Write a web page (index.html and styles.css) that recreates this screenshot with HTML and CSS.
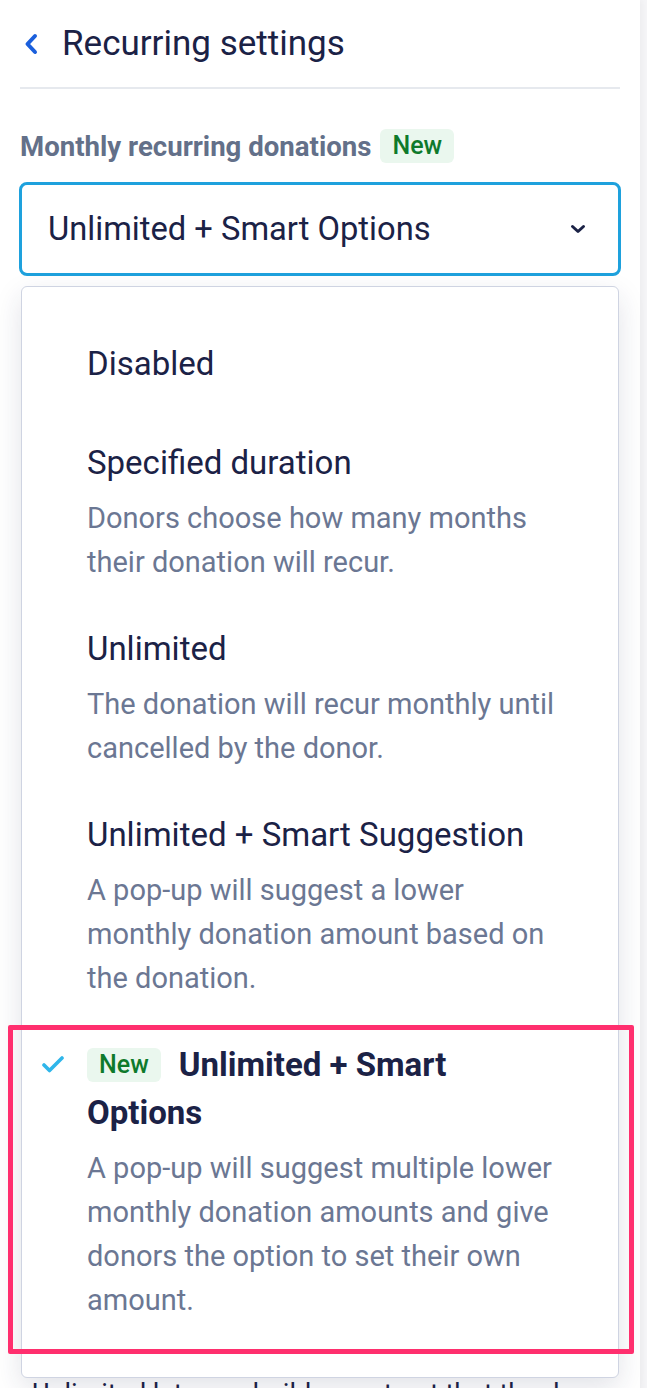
FILE: index.html
```html
<html lang="en">
<head>
    <meta charset="UTF-8">
    <meta name="viewport" content="width=device-width, initial-scale=1.0">
    <title>Recurring settings</title>
    <link rel="stylesheet" href="styles.css">
</head>
<body>
    <div class="panel">
        <div class="panel-header">
            <button type="button" class="back-button">
                <svg width="16" height="22" viewBox="0 0 16 22"><path d="M12 3 L4.5 11 L12 19" fill="none" stroke="#1a5fdc" stroke-width="4" stroke-linecap="round" stroke-linejoin="round"/></svg>
            </button>
            <h1 class="panel-title">Recurring settings</h1>
        </div>

        <div class="field">
            <div class="field-label">Monthly recurring donations <span class="badge">New</span></div>

            <div class="select-wrap">
                <div class="select-box">
                    <span class="select-value">Unlimited + Smart Options</span>
                    <svg class="select-arrow" width="16" height="12" viewBox="0 0 16 12"><path d="M2.5 3.5 L8 8.5 L13.5 3.5" fill="none" stroke="#1b2246" stroke-width="3" stroke-linecap="round" stroke-linejoin="round"/></svg>
                </div>

                <div class="dropdown">
                    <div class="option option-single">
                        <div class="option-title">Disabled</div>
                    </div>
                    <div class="option">
                        <div class="option-title">Specified duration</div>
                        <div class="option-desc">Donors choose how many months their donation will recur.</div>
                    </div>
                    <div class="option">
                        <div class="option-title">Unlimited</div>
                        <div class="option-desc">The donation will recur monthly until cancelled by the donor.</div>
                    </div>
                    <div class="option">
                        <div class="option-title">Unlimited + Smart Suggestion</div>
                        <div class="option-desc">A pop-up will suggest a lower monthly donation amount based on the donation.</div>
                    </div>
                    <div class="option option-selected">
                        <svg class="option-check" width="22" height="18" viewBox="0 0 22 18"><path d="M2 9 L7.5 14.5 L20 2" fill="none" stroke="#2fb6ea" stroke-width="3.6" stroke-linecap="round" stroke-linejoin="round"/></svg>
                        <div class="option-title"><span class="badge badge-inline">New</span>Unlimited + Smart Options</div>
                        <div class="option-desc">A pop-up will suggest multiple lower monthly donation amounts and give donors the option to set their own amount.</div>
                        <div class="highlight"></div>
                    </div>
                </div>
            </div>

            <p class="field-help">Unlimited lets you build a contract that the donor can cancel whenever they like.</p>
        </div>
    </div>
</body>
</html>
```

FILE: styles.css
```css
html {
    background-color: #f5f5f7;
}

body {
    margin: 0;
    font-family: Roboto, "Noto Sans", sans-serif;
    color: #1b2246;
}

.panel {
    width: 640px;
    min-height: 1388px;
    box-sizing: border-box;
    padding: 0 20px;
    background-color: #fff;
    box-shadow: 2px 0 6px rgba(0, 0, 0, 0.04);
}

.panel-header {
    display: flex;
    align-items: center;
    height: 87px;
    border-bottom: 2px solid #e6e9ee;
}

.back-button {
    display: flex;
    padding: 0;
    margin: 0 23px 0 3px;
    border: none;
    background: none;
    cursor: pointer;
}

.panel-title {
    margin: 0;
    font-size: 35px;
    font-weight: 400;
    color: #1b2246;
}

.field {
    padding-top: 40px;
}

.field-label {
    display: flex;
    align-items: center;
    font-size: 27.6px;
    font-weight: 700;
    color: #637089;
}

.badge {
    display: inline-block;
    margin-left: 9px;
    padding: 0 12px;
    height: 34px;
    line-height: 34px;
    border-radius: 6px;
    background-color: #eaf7ee;
    color: #0e7a2b;
    font-size: 25px;
    font-weight: 500;
}

.select-wrap {
    position: relative;
    margin-top: 19px;
}

.select-box {
    display: flex;
    align-items: center;
    justify-content: space-between;
    height: 94px;
    box-sizing: border-box;
    margin: 0 -1px;
    padding: 0 32px 0 26px;
    border: 3px solid #1ea1dd;
    border-radius: 8px;
}

.select-value {
    font-size: 32.7px;
}

.dropdown {
    position: absolute;
    top: 104px;
    left: 1px;
    right: 1px;
    z-index: 10;
    padding: 33px 0 34px;
    background-color: #fff;
    border: 1px solid #cfd4e2;
    border-radius: 6px;
    box-shadow: 0 10px 28px rgba(30, 40, 80, 0.13);
}

.option {
    position: relative;
    padding: 20px 50px 21px 65px;
}

.option-single {
    padding-bottom: 31px;
}

.option-title {
    font-size: 33px;
    line-height: 48px;
}

.option-desc {
    margin-top: 9px;
    font-size: 29px;
    line-height: 44px;
    color: #6b7793;
}

.option-selected .option-title {
    font-weight: 700;
}

.option-check {
    position: absolute;
    left: 20px;
    top: 35px;
}

.badge-inline {
    margin: 0 18px 0 0;
    vertical-align: 3px;
}

.highlight {
    position: absolute;
    top: 4px;
    bottom: -11px;
    left: -14px;
    right: -16px;
    border: 5px solid #ff2f6e;
    border-radius: 2px;
    pointer-events: none;
}

.field-help {
    margin: 1100px 0 0 12px;
    font-size: 27px;
    line-height: 36px;
    color: #1b2246;
}
```
